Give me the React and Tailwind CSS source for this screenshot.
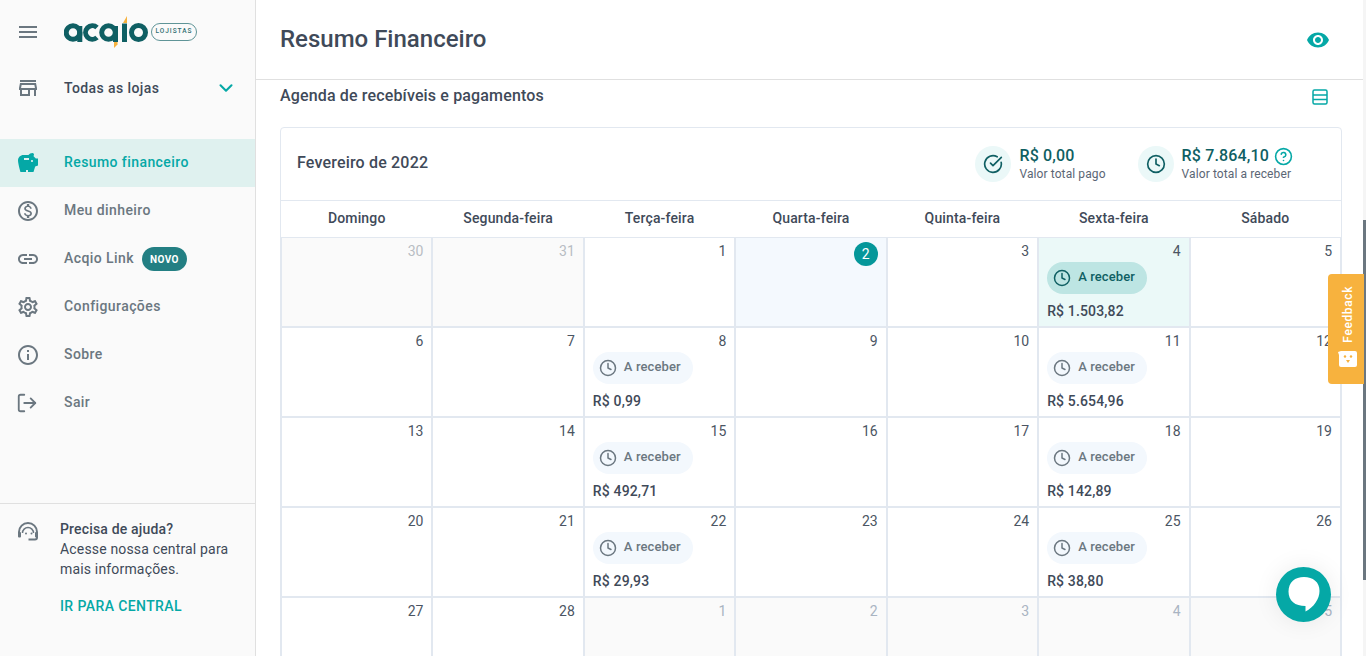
import React from 'react';
import { ChevronDown, CircleCheckBig, CircleHelp, Clock, LogOut } from 'lucide-react';
import {
  MdInfoOutline,
  MdLink,
  MdMenu,
  MdOutlineMonetizationOn,
  MdOutlineSettings,
  MdOutlineStore,
  MdSavings,
  MdVisibility,
} from 'react-icons/md';

const weekDays = ['Domingo', 'Segunda-feira', 'Terça-feira', 'Quarta-feira', 'Quinta-feira', 'Sexta-feira', 'Sábado'];

const navItems = [
  { label: 'Resumo financeiro', Icon: MdSavings, active: true },
  { label: 'Meu dinheiro', Icon: MdOutlineMonetizationOn },
  { label: 'Acqio Link', Icon: MdLink, badge: 'NOVO' },
  { label: 'Configurações', Icon: MdOutlineSettings },
  { label: 'Sobre', Icon: MdInfoOutline },
  { label: 'Sair', Icon: LogOut, lucide: true },
];

const days = [
  { n: 30, muted: true }, { n: 31, muted: true }, { n: 1 }, { n: 2, today: true }, { n: 3 },
  { n: 4, amount: '1.503,82', current: true }, { n: 5 },
  { n: 6 }, { n: 7 }, { n: 8, amount: '0,99' }, { n: 9 }, { n: 10 }, { n: 11, amount: '5.654,96' }, { n: 12 },
  { n: 13 }, { n: 14 }, { n: 15, amount: '492,71' }, { n: 16 }, { n: 17 }, { n: 18, amount: '142,89' }, { n: 19 },
  { n: 20 }, { n: 21 }, { n: 22, amount: '29,93' }, { n: 23 }, { n: 24 }, { n: 25, amount: '38,80' }, { n: 26 },
  { n: 27 }, { n: 28 }, { n: 1, muted: true, cool: true }, { n: 2, muted: true, cool: true },
  { n: 3, muted: true, cool: true }, { n: 4, muted: true, cool: true }, { n: 5, muted: true, cool: true },
];

function AcqioLogo() {
  return (
    <svg width="86" height="34" viewBox="0 0 86 34" fill="none">
      <g stroke="#0f5f63" strokeWidth="5">
        <circle cx="9" cy="17.5" r="6.8" />
        <path d="M15.8 11v9.5" />
        <path d="M15.8 17.5V27" />
        <path d="M33 12.5a6.8 6.8 0 1 0 0 10" />
        <circle cx="44.5" cy="17.5" r="6.8" />
        <path d="M51.5 11v16" />
        <path d="M60.5 8.5V27" />
        <circle cx="74.5" cy="17.5" r="7" />
      </g>
      <path d="M59 8l4-7v7z" fill="#f7b23e" />
      <path d="M53.5 27v2.5L50 33v-6z" fill="#f7b23e" />
    </svg>
  );
}

function SupportIcon() {
  return (
    <svg className="mt-px shrink-0" width="24" height="24" viewBox="0 0 24 24" fill="none" stroke="#6b7780" strokeWidth="2">
      <path d="M3 14v-2a9 9 0 0 1 18 0v2" />
      <path d="M6.500 13a5.500 5.500 0 0 1 11 0" strokeWidth="1.500" />
      <path d="M21 15v2.500a2 2 0 0 1-2 2h-6.500" />
      <rect x="2" y="12" width="3" height="5.500" rx="1" fill="#6b7780" stroke="none" />
      <rect x="19" y="12" width="3" height="5.500" rx="1" fill="#6b7780" stroke="none" />
      <circle cx="10" cy="13.500" r="1" fill="#6b7780" stroke="none" />
      <circle cx="15.500" cy="13.500" r="1" fill="#6b7780" stroke="none" />
    </svg>
  );
}

function AgendaIcon() {
  return (
    <svg width="16" height="16" viewBox="0 0 16 16" fill="none" stroke="#05a8a6" strokeWidth="1.500">
      <rect x="1" y="1" width="14" height="14" rx="1.500" />
      <path d="M1 6h14M1 10.500h14" />
    </svg>
  );
}

function Sidebar() {
  return (
    <aside className="flex w-[256px] shrink-0 flex-col border-r border-[#e0e0e0] bg-[#fafafa]">
      <div className="flex h-[64px] items-center pl-4">
        <MdMenu className="text-[24px] text-[#6b7780]" />
        <div className="ml-6 flex items-center">
          <AcqioLogo />
          <span className="ml-[1px] mt-[-1px] flex h-[18px] w-[46px] items-center justify-center rounded-full border border-[#5f9497] text-[6.5px] font-medium tracking-[1px] text-[#2f6d71]">
            LOJISTAS
          </span>
        </div>
      </div>
      <div className="flex h-[48px] items-center pl-4 pr-[18px]">
        <MdOutlineStore className="text-[24px] text-[#6b7780]" />
        <span className="ml-6 flex-1 text-sm font-medium tracking-[0.4px] text-[#3f4a59]">Todas as lojas</span>
        <ChevronDown size={22} strokeWidth={2.25} className="text-[#05a8a6]" />
      </div>
      <nav className="mt-[27px] flex flex-col">
        {navItems.map(({ label, Icon, active, badge, lucide }) => (
          <div
            key={label}
            className={`flex h-[48px] items-center pl-4 ${active ? 'bg-[#dff1ef] text-[#05a8a6]' : 'text-[#6b7780]'}`}
          >
            {lucide ? <Icon size={22} strokeWidth={2} className="shrink-0" /> : <Icon className="shrink-0 text-[24px]" />}
            <span className={`mt-[-2px] text-sm font-medium tracking-[0.42px] ${lucide ? 'ml-[26px]' : 'ml-6'}`}>{label}</span>
            {badge && (
              <span className="ml-2 flex h-6 w-[45px] items-center justify-center rounded-full bg-[#237f83] text-[10px] font-bold tracking-[0.4px] text-white">
                {badge}
              </span>
            )}
          </div>
        ))}
      </nav>
      <div className="mt-auto flex h-[153px] border-t border-[#e0e0e0] pl-4 pr-4 pt-[15px]">
        <SupportIcon />
        <div className="ml-5 text-sm leading-5 tracking-[0.17px] text-[#3f4a59]">
          <p className="font-medium">Precisa de ajuda?</p>
          <p>Acesse nossa central para</p>
          <p>mais informações.</p>
          <p className="mt-[17px] font-medium tracking-[0.4px] text-[#05a8a6]">IR PARA CENTRAL</p>
        </div>
      </div>
    </aside>
  );
}

function Summary({ Icon, value, label, help }) {
  return (
    <div className="flex items-center">
      <span className="flex h-9 w-9 items-center justify-center rounded-full bg-[#ebf8f8]">
        <Icon size={20} strokeWidth={2} className="text-[#0f5f63]" />
      </span>
      <div className="ml-2 flex flex-col">
        <span className="flex items-center text-base font-medium leading-5 tracking-[0.15px] text-[#0f5f63]">
          {value}
          {help && <CircleHelp size={19} strokeWidth={2} className="ml-[5px] text-[#05a8a6]" />}
        </span>
        <span className="text-xs leading-4 tracking-[0.1px] text-[#5b6675]">{label}</span>
      </div>
    </div>
  );
}

function DayCell({ day }) {
  const bg = day.current ? 'bg-[#ebf9f8]' : day.today ? 'bg-[#f4f9fe]' : day.muted ? 'bg-[#fafafa]' : 'bg-white';
  const numberColor = day.cool ? 'text-[#a9b4c2]' : day.muted ? 'text-[#b8bdc3]' : 'text-[#4b5563]';
  return (
    <div className={`flex h-[90px] flex-col border border-[#e2e8f0] pl-2 pr-2 pt-[3px] ${bg}`}>
      {day.today ? (
        <span className="mt-px flex h-6 w-6 items-center justify-center self-end rounded-full bg-[#05979a] text-sm text-white">
          {day.n}
        </span>
      ) : (
        <span className={`self-end text-sm leading-5 ${numberColor}`}>{day.n}</span>
      )}
      {day.amount && (
        <>
          <span
            className={`mt-px flex h-8 w-[100px] items-center rounded-full pl-[6px] text-[13px] font-medium tracking-[0.1px] ${
              day.current ? 'bg-[#bde5e3] text-[#0f5f63]' : 'bg-[#f3f8fd] text-[#6b7780]'
            }`}
          >
            <Clock size={18} strokeWidth={2} className="mr-[7px] shrink-0" />
            <span className="mt-[-3px]">A receber</span>
          </span>
          <span className="mt-[7px] text-sm font-medium leading-5 tracking-[0.15px] text-[#3f4a59]">R$ {day.amount}</span>
        </>
      )}
    </div>
  );
}

function FeedbackTab() {
  return (
    <div className="absolute right-[2px] top-[274px] flex h-[110px] w-9 flex-col items-center rounded-l-[4px] bg-[#f7b23e] pt-[12px]">
      <span className="ml-[3px] text-xs font-medium tracking-[0.6px] text-white [writing-mode:vertical-rl] rotate-180">Feedback</span>
      <svg className="mt-[8px] ml-[2px]" width="19" height="16" viewBox="0 0 19 16">
        <path d="M3 0h14a2 2 0 0 1 2 2v12a2 2 0 0 1-2 2H3a2 2 0 0 1-2-2V4L0 1z" fill="#fff" />
        <circle cx="7" cy="5.500" r="1.200" fill="#f7b23e" />
        <circle cx="13" cy="5.500" r="1.200" fill="#f7b23e" />
        <path d="M8 9h4l-2 3z" fill="#f7b23e" />
      </svg>
    </div>
  );
}

function ChatButton() {
  return (
    <div className="absolute left-[1276px] top-[567px] flex h-[55px] w-[55px] items-center justify-center rounded-full bg-[#05a8a6] shadow-[0_0_24px_rgba(0,0,0,0.08)]">
      <svg width="32" height="35" viewBox="0 0 32 35">
        <path
          d="M16 0C25 0 31.500 5 31.500 14C31.500 22 26 30 17.500 34.500V29C7 29 0.500 24 0.500 14.500C0.500 5 7 0 16 0z"
          fill="#fff"
        />
      </svg>
    </div>
  );
}

export default function App() {
  return (
    <div className="relative flex h-screen w-screen overflow-hidden bg-white font-['Roboto',sans-serif]">
      <Sidebar />
      <main className="min-w-0 flex-1">
        <header className="flex h-[80px] items-center justify-between border-b border-[#e0e0e0] pl-6 pr-[33px]">
          <h1 className="mt-[-2px] text-2xl font-medium text-[#3f4a59]">Resumo Financeiro</h1>
          <MdVisibility className="text-[24px] text-[#05a8a6]" />
        </header>
        <div className="pl-6 pr-[21px]">
          <div className="flex h-[47px] items-start justify-between pr-[14px] pt-[6px]">
            <h2 className="text-base font-medium leading-5 tracking-[0.15px] text-[#3f4a59]">Agenda de recebíveis e pagamentos</h2>
            <span className="pt-[3px]"><AgendaIcon /></span>
          </div>
          <section className="rounded-t-[4px] border border-[#e2e8f0]">
            <div className="flex h-[73px] items-center justify-between border-b border-[#e2e8f0] pl-4 pr-[48px]">
              <span className="mt-[-2px] text-base font-medium tracking-[0.18px] text-[#3f4a59]">Fevereiro de 2022</span>
              <div className="flex items-center gap-8">
                <Summary Icon={CircleCheckBig} value="R$ 0,00" label="Valor total pago" />
                <Summary Icon={Clock} value="R$ 7.864,10" label="Valor total a receber" help />
              </div>
            </div>
            <div className="grid h-[36px] grid-cols-7 items-center">
              {weekDays.map((d) => (
                <span key={d} className="mt-[-2px] text-center text-sm font-medium tracking-[0.15px] text-[#3f4a59]">{d}</span>
              ))}
            </div>
            <div className="grid grid-cols-7">
              {days.map((day, i) => <DayCell key={i} day={day} />)}
            </div>
          </section>
        </div>
      </main>
      <div className="w-[3px] shrink-0 bg-[#f5f5f5]">
        <div className="mt-[220px] h-[360px] w-[3px] bg-[#6b7780]" />
      </div>
      <FeedbackTab />
      <ChatButton />
    </div>
  );
}
